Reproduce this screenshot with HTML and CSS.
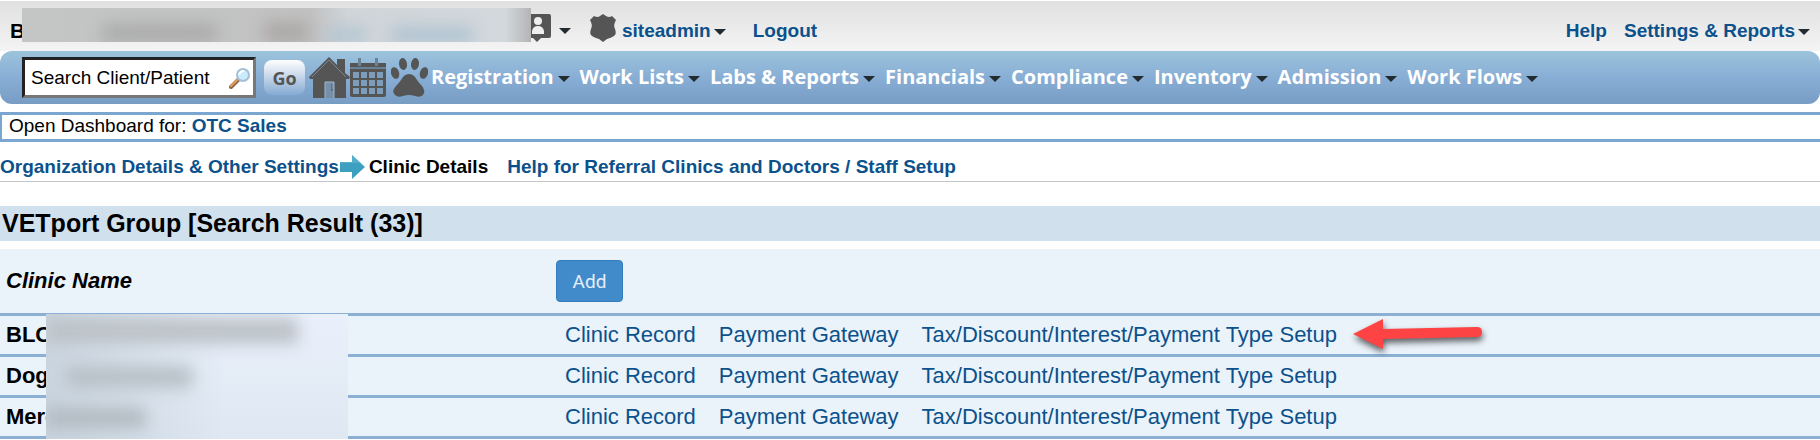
FILE: index.html
```html
<!DOCTYPE html>
<html lang="en">
<head>
  <meta charset="UTF-8">
  <meta name="viewport" content="width=device-width, initial-scale=1.0">
  <title>VETport - Clinic Details</title>
  <link rel="stylesheet" href="styles.css">
</head>
<body>
  <header class="topbar">
    <span class="clinic">B</span>
    <div class="mask mask-top"></div>
    <svg class="contact-icon" width="28" height="28" viewBox="0 0 28 28">
      <path fill="#555" d="M2 0h24q2 0 2 2v20q0 2-2 2h-8l-4 4-4-4H2q-2 0-2-2V2q0-2 2-2z"/>
      <circle cx="15" cy="7" r="4" fill="#eee"/>
      <path fill="#eee" d="M9 20v-3q1-5 6-5t6 5v3z"/>
    </svg>
    <span class="caret"></span>
    <svg class="shield-icon" width="28" height="28" viewBox="0 0 28 28">
      <path fill="#555" d="M5 2q4 2 6 0l3-2 3 2q3 2 6 0l4 4q-3 5-1 9 2 5-1 7-3 2-7 3l-4 3-4-3q-4-1-7-3-3-2-1-7 2-4-1-9z"/>
    </svg>
    <a href="#" class="user">siteadmin<span class="caret"></span></a>
    <a href="#">Logout</a>
    <div class="topbar-right">
      <a href="#">Help</a>
      <a href="#">Settings &amp; Reports<span class="caret"></span></a>
    </div>
  </header>

  <nav class="navbar">
    <form class="search">
      <div class="search-box">
        <input type="text" aria-label="Search Client/Patient" value="Search Client/Patient">
        <svg width="22" height="22" viewBox="0 0 22 22">
          <path d="M2 20l7-7" stroke="#8a6a4a" stroke-width="4" stroke-linecap="round"/>
          <path d="M2 19l6-6" stroke="#e2a05c" stroke-width="2" stroke-linecap="round"/>
          <circle cx="14" cy="8" r="6" fill="#c9ebfb" stroke="#a5bfd6" stroke-width="2"/>
          <path d="M10 8q1-4 5-4" stroke="#fff" stroke-width="2" fill="none"/>
        </svg>
      </div>
      <button type="submit" class="go">Go</button>
    </form>
    <div class="shortcuts">
      <a href="#" aria-label="Home">
        <svg width="41" height="41" viewBox="0 0 41 41">
          <path fill="#555" d="M20 0l8 8V2h8v14l5 4-1 2h-3v19H4V22H1l-1-2z"/>
          <path d="M3 20L20 3l17 17" fill="none" stroke="#7a8894" stroke-width="1"/>
          <path fill="#7590a8" stroke="#a0b8cc" d="M16 41V25h9v16"/>
          <path fill="#55708a" d="M22 27h1v5h-1zM22 32h2v2h-2z"/>
        </svg>
      </a>
      <a href="#" aria-label="Calendar">
        <svg width="36" height="41" viewBox="0 0 36 41">
          <path fill="#555" d="M0 6h36v32q0 2-2 2H2q-2 0-2-2z"/>
          <path fill="#6b8294" d="M0 10h36v2H0zM8 1h3v8H8zM25 1h3v8h-3z"/>
          <path fill="#7c9cba" d="M3 15h6v6H3zM11 15h6v6h-6zM19 15h6v6h-6zM27 15h6v6h-6zM3 23h6v6H3zM11 23h6v6h-6zM19 23h6v6h-6zM27 23h6v6h-6zM3 31h6v6H3zM11 31h6v6h-6zM19 31h6v6h-6zM27 31h6v6h-6z"/>
        </svg>
      </a>
      <a href="#" aria-label="Patients" class="paw">
        <svg width="37" height="41" viewBox="0 0 37 41">
          <g fill="#555">
            <ellipse cx="12" cy="7" rx="4" ry="6" transform="rotate(-8 12 7)"/>
            <ellipse cx="24" cy="7" rx="4" ry="6" transform="rotate(8 24 7)"/>
            <ellipse cx="4" cy="16" rx="4" ry="6" transform="rotate(-18 4 16)"/>
            <ellipse cx="33" cy="16" rx="4" ry="6" transform="rotate(18 33 16)"/>
            <path d="M18 17q5 0 8 6 2 3 5 6 4 5 1 9-3 3-8 1-6-2-12 0-5 2-8-1-4-4 1-9 3-3 5-6 3-6 8-6z"/>
          </g>
        </svg>
      </a>
    </div>
    <ul class="menu">
      <li><a href="#">Registration<span class="caret"></span></a></li>
      <li><a href="#">Work Lists<span class="caret"></span></a></li>
      <li><a href="#">Labs &amp; Reports<span class="caret"></span></a></li>
      <li><a href="#">Financials<span class="caret"></span></a></li>
      <li><a href="#">Compliance<span class="caret"></span></a></li>
      <li><a href="#">Inventory<span class="caret"></span></a></li>
      <li><a href="#">Admission<span class="caret"></span></a></li>
      <li><a href="#">Work Flows<span class="caret"></span></a></li>
    </ul>
  </nav>

  <div class="dashboard">Open Dashboard for: <a href="#">OTC Sales</a></div>

  <div class="breadcrumb">
    <a href="#">Organization Details &amp; Other Settings</a>
    <svg width="25" height="24" viewBox="0 0 25 24">
      <path fill="#3ea0c0" d="M0 7h12V0l13 12-13 12v-7H0z"/>
      <path fill="#6cbcd4" d="M0 7h12V0l9 8H0z" opacity=".5"/>
    </svg>
    <span>Clinic Details</span>
    <a href="#" class="help-link">Help for Referral Clinics and Doctors / Staff Setup</a>
  </div>

  <main>
    <h1>VETport Group [Search Result (33)]</h1>
    <div class="results">
      <table>
        <thead>
          <tr>
            <th class="name-col">Clinic Name</th>
            <th><button type="button" class="add">Add</button></th>
          </tr>
        </thead>
        <tbody>
          <tr>
            <td class="name">BLO</td>
            <td class="links">
              <a href="#">Clinic Record</a><a href="#">Payment Gateway</a><a href="#" class="marked">Tax/Discount/Interest/Payment Type Setup
                <svg class="pointer" width="140" height="42" viewBox="0 0 140 42">
                  <path fill="#fd4343" d="M1 17L31 2v10l94-2q5 0 5 5t-5 5l-94 2v10z"/>
                </svg></a>
            </td>
          </tr>
          <tr>
            <td class="name">Dog</td>
            <td class="links"><a href="#">Clinic Record</a><a href="#">Payment Gateway</a><a href="#">Tax/Discount/Interest/Payment Type Setup</a></td>
          </tr>
          <tr>
            <td class="name">Merc</td>
            <td class="links"><a href="#">Clinic Record</a><a href="#">Payment Gateway</a><a href="#">Tax/Discount/Interest/Payment Type Setup</a></td>
          </tr>
        </tbody>
      </table>
      <div class="mask mask-names"></div>
    </div>
  </main>
</body>
</html>
```
FILE: styles.css
```css
* { box-sizing: border-box; }
body { margin: 0; font-family: Arial, "Liberation Sans", sans-serif; font-size: 19px; line-height: 22px; color: #000; background-color: #fff; }
a { color: #0b518b; text-decoration: none; font-weight: bold; }
svg { display: block; flex-shrink: 0; }
.caret { display: inline-block; margin-left: 3px; border-left: 6px solid transparent; border-right: 6px solid transparent; border-top: 6px solid #222b30; vertical-align: middle; }

/* top bar */
.topbar { position: relative; display: flex; align-items: center; height: 50px; margin-top: 1px; padding: 10px 10px 0; background: linear-gradient(#e0e0e0, #f4f4f4); font-weight: bold; }
.clinic { width: 513px; font-size: 21px; }
.contact-icon { margin-bottom: 6px; }
.contact-icon + .caret { margin: 0 18px 0 8px; }
.shield-icon { margin: 0 5px 6px 0; }
.user { margin-right: 27px; }
.topbar-right { display: flex; gap: 17px; margin-left: auto; }

/* smudged out names */
.mask { position: absolute; overflow: hidden; }
.mask::before { content: ""; position: absolute; inset: 0; filter: blur(8px); }
.mask-top { left: 22px; top: 7px; width: 509px; height: 34px; background: linear-gradient(to right, #c4c6c6, #c2c2c2 57%, #d0d5d9 64%, #d2d8dc 95%, #b4b4b4); }
.mask-top::before {
  background:
    linear-gradient(#aaa, #aaa) 80px 16px / 115px 18px no-repeat,
    linear-gradient(#aba8a6, #aba8a6) 242px 14px / 44px 20px no-repeat,
    linear-gradient(#b0c4d2, #b0c4d2) 304px 20px / 40px 14px no-repeat,
    linear-gradient(#aac0d0, #aac0d0) 370px 20px / 80px 14px no-repeat; }
.mask-names { left: 46px; top: 65px; width: 302px; bottom: 0; background: linear-gradient(to right, rgba(190, 202, 212, 0.7), transparent 60%), linear-gradient(#e9f0fb, #dfe8f2); }
.mask-names::before {
  background:
    linear-gradient(#bcc2c8, #bcc2c8) 0 4px / 250px 26px no-repeat,
    linear-gradient(#adb0b8, #adb0b8) 60px 8px / 110px 20px no-repeat,
    linear-gradient(#b0b4ba, #b0b4ba) 210px 8px / 42px 22px no-repeat,
    linear-gradient(#b8c0c7, #b8c0c7) 20px 52px / 126px 22px no-repeat,
    linear-gradient(#b2bac1, #b2bac1) 0 94px / 100px 20px no-repeat; }

/* navigation */
.navbar { display: flex; align-items: center; height: 53px; padding: 0 22px; border-radius: 12px; background: linear-gradient(#9cc3dc, #88aed5 50%, #779dc4); }
.search { display: flex; align-items: center; gap: 8px; }
.search-box { display: flex; align-items: center; width: 234px; height: 41px; padding: 0 2px 0 6px; border: 3px solid; border-color: #222 #777 #777 #222; background-color: #fff; }
.search-box input { flex: 1; min-width: 0; padding: 0; border: none; outline: none; background: none; font: inherit; color: #000; }
.go { width: 41px; height: 35px; padding: 0; border: none; border-radius: 8px; background: linear-gradient(#fff, #cfdcec 40%, #85aad3); font-family: "Trebuchet MS", "Open Sans", sans-serif; font-size: 18px; font-weight: bold; color: #555; }
.shortcuts { display: flex; margin-left: 4px; }
.paw { margin-left: 5px; }
.menu { display: flex; gap: 10px; margin: 0 0 0 3px; padding: 0; list-style: none; }
.menu a { font-family: "Trebuchet MS", "Open Sans", sans-serif; font-size: 20px; color: #fff; white-space: nowrap; }
.menu .caret { margin-left: 4px; }

.dashboard { margin-top: 8px; padding: 0 7px 2px; border: 3px solid #7ba6cf; border-width: 3px 0 3px 2px; }
.breadcrumb { display: flex; align-items: center; height: 40px; padding-top: 11px; border-bottom: 1px solid #c4c4c4; font-weight: bold; }
.breadcrumb svg { margin: 0 4px 0 1px; }
.help-link { margin-left: 19px; }

/* results */
h1 { margin: 24px 0 8px; padding: 0 2px; background-color: #d0e0ed; font-size: 25px; line-height: 35px; }
.results { position: relative; }
table { width: 100%; border-collapse: separate; border-spacing: 0; background-color: #eaf2fa; font-size: 22px; }
th, td { height: 41px; padding: 0 0 0 6px; border-bottom: 3px solid #8bb0d4; text-align: left; }
th { height: 67px; font-style: italic; }
.name-col { width: 555px; }
.name { font-weight: bold; }
thead th:last-child { padding-left: 1px; }
.add { display: block; width: 67px; height: 42px; border: 1px solid #357ebd; border-radius: 4px; background-color: #428bca; font-family: Roboto, sans-serif; font-size: 19px; color: #e4eef8; }
.links { padding-left: 10px; white-space: nowrap; }
.links a { margin-right: 23px; font-weight: normal; }
.marked { position: relative; }
.pointer { position: absolute; left: 100%; top: -5px; margin-left: 15px; filter: drop-shadow(1px 4px 3px rgba(0, 0, 0, 0.6)); }
```
